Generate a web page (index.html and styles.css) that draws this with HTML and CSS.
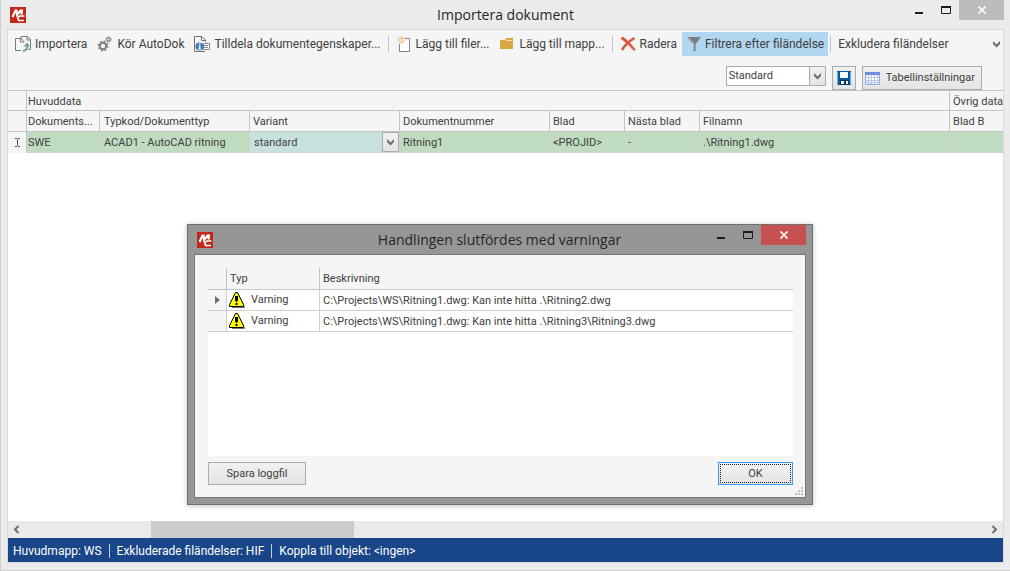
FILE: index.html
```html
<!DOCTYPE html>
<html lang="sv">
<head>
<meta charset="utf-8">
<title>Importera dokument</title>
<link rel="stylesheet" href="styles.css">
</head>
<body>
<svg class="defs" aria-hidden="true">
  <symbol id="logo" viewBox="0 0 16 16">
    <rect width="16" height="16" fill="#c1281b"/>
    <path d="M2.500 10 5.500 3.500 6.500 3.500 7 8 10.500 3.500H12L11.500 7.500" fill="none" stroke="#fff" stroke-width="2.100"/>
    <path d="M14.500 9H10.500Q8 9 8 11.500T10 13.500H14" fill="none" stroke="#fff" stroke-width="1.700"/>
  </symbol>
  <symbol id="chevron" viewBox="0 0 9 7">
    <path d="M1 0V3L4.500 6.500 8 3V0L4.500 3.500Z" fill="#6d6d6d"/>
  </symbol>
  <symbol id="warning" viewBox="0 0 16 16">
    <path d="M8.500 2 15.500 14.500V15.500H3" fill="none" stroke="#777" stroke-width="1"/>
    <path d="M6.500 .5H8.500L14.500 12.500V14.500H.5V12.500Z" fill="#ff0" stroke="#000"/>
    <path d="M6 4H9V8L8 10H7L6 8ZM6.500 11H8.500V13H6.500Z" fill="#000"/>
  </symbol>
</svg>
<div class="window">
  <header class="titlebar">
    <svg class="logo"><use href="#logo"/></svg>
    <h1>Importera dokument</h1>
    <div class="controls">
      <button class="control" aria-label="Minimera"><svg width="12" height="10" viewBox="0 0 12 10"><path d="M2 7H10V9H2Z" fill="#1b1b1b"/></svg></button>
      <button class="control" aria-label="Maximera"><svg width="12" height="10" viewBox="0 0 12 10"><path d="M1.500 1.500H10.500V8.500H1.500Z" fill="none" stroke="#1b1b1b"/><path d="M1 2H11" stroke="#1b1b1b" stroke-width="2"/></svg></button>
      <button class="control close" aria-label="Stäng"><svg width="10" height="8" viewBox="0 0 10 8"><path d="M1.500 .5 8.500 7.500M8.500 .5 1.500 7.500" stroke="#fff" stroke-width="1.700"/></svg></button>
    </div>
  </header>
  <main class="client">
    <div class="toolbar">
      <button class="tool"><svg viewBox="0 0 16 16"><path d="M6 3.500V.5H12.500L15.500 3.500V13.500H13M12 .5V4H15.500" fill="none" stroke="#7b7b7b"/><path d="M.5 2.500H6L9 5.500V6M6 14.500H.5V2.500M5.500 2.500V6H9" fill="none" stroke="#7b7b7b"/><path d="M8 15C12 14.500 12.500 12 12.500 9" fill="none" stroke="#6fa397" stroke-width="2"/><path d="M8.500 10.500 12 6.500 15 10.500Z" fill="#6fa397"/></svg>Importera</button>
      <button class="tool"><svg viewBox="0 0 16 16"><circle cx="6" cy="10" r="3.200" fill="none" stroke="#808080" stroke-width="2"/><circle cx="6" cy="10" r="4.700" fill="none" stroke="#808080" stroke-width="1.500" stroke-dasharray="1.850 1.850"/><circle cx="11.500" cy="3.500" r="1.700" fill="none" stroke="#808080" stroke-width="1.200"/><circle cx="11.500" cy="3.500" r="2.700" fill="none" stroke="#808080" stroke-width="1" stroke-dasharray="1.060 1.060"/></svg>Kör AutoDok</button>
      <button class="tool"><svg viewBox="0 0 16 16"><path d="M11.500 6V4L8 .5H.5V15.500H11M7.500 .5V4.500H11.500" fill="none" stroke="#6f6f6f"/><path d="M9.500 7.500H15.500V13.500H9.500ZM10 9.500H14M10 11.500H14" fill="#fff" stroke="#8a8a8a"/><circle cx="5.500" cy="10.500" r="4" fill="#3a7bbd"/><path d="M5 7H6.500V8.500H5ZM4.500 9.500H6.500V12.500H7V13.500H4V12.500H5V10.500H4.500Z" fill="#fff"/></svg>Tilldela dokumentegenskaper...</button>
      <span class="separator"></span>
      <button class="tool"><svg viewBox="0 0 16 16"><path d="M9 2.500H13.500V15.500H3.500V8" fill="#fff" stroke="#858585"/><path d="M5.500 0V8M1.500 4H9.500M2.500 1 8.500 7M8.500 1 2.500 7" stroke="#e9b75c" stroke-width="1"/><rect x="4.500" y="3" width="2" height="2" fill="#fff"/></svg>Lägg till filer...</button>
      <button class="tool"><svg viewBox="0 0 16 16"><path d="M1 4H6L7.500 2H14V13H1Z" fill="#d8a83f"/><path d="M7 4.500H13.500" stroke="#f6e2b0"/></svg>Lägg till mapp...</button>
      <span class="separator"></span>
      <button class="tool"><svg viewBox="0 0 16 16"><path d="M1 2.500 3 1Q10 6 15 13.500L14 14.500Q8 7 1 2.500Z" fill="#d9593d" stroke="#d9593d"/><path d="M14.500 2Q6 7 2 14" fill="none" stroke="#d9593d" stroke-width="2.600"/></svg>Radera</button>
      <button class="tool pressed" aria-pressed="true"><svg viewBox="0 0 16 16"><path d="M1 1H15L9.500 8V15H7V8Z" fill="#787d80"/><path d="M3 2 7.500 7.500V14" fill="none" stroke="#b8bec2"/></svg>Filtrera efter filändelse</button>
      <span class="separator"></span>
      <button class="tool">Exkludera filändelser</button>
      <button class="overflow" aria-label="Fler"><svg class="chevron"><use href="#chevron"/></svg></button>
    </div>
    <div class="options">
      <div class="combo">
        <select aria-label="Tabellayout"><option>Standard</option></select>
        <span class="drop"><svg class="chevron"><use href="#chevron"/></svg></span>
      </div>
      <button class="push square" aria-label="Spara"><svg width="14" height="14" viewBox="0 0 14 14"><path d="M0 0H14V14H1L0 13Z" fill="#07579b"/><path d="M.5 1V13M13.500 1V13" stroke="#62b2e4"/><path d="M3 1H11V7H3Z" fill="#f5fbff"/><path d="M3 9H12V14H3Z" fill="#12375b"/><path d="M4 10H7V13H4ZM9 10H11V13H9Z" fill="#eef6fb"/></svg></button>
      <button class="push table-settings"><svg width="15" height="13" viewBox="0 0 15 13"><path d="M.5 .5H14.500V12.500H.5Z" fill="#fff" stroke="#8fabe6"/><path d="M0 0H15V3H0Z" fill="#6a8fe4"/><path d="M3.500 3V12M6.500 3V12M9.500 3V12M12.500 3V12M1 5.500H14M1 8.500H14M1 10.500H14" stroke="#b9c8eb"/></svg>Tabellinställningar</button>
    </div>
    <table class="grid">
      <colgroup><col class="w19"><col class="w73"><col class="w150"><col class="w150"><col class="w150"><col class="w75"><col class="w75"><col class="w250"><col></colgroup>
      <thead>
        <tr class="bands"><th></th><th colspan="7">Huvuddata</th><th>Övrig data</th></tr>
        <tr><th></th><th>Dokuments...</th><th>Typkod/Dokumenttyp</th><th>Variant</th><th>Dokumentnummer</th><th>Blad</th><th>Nästa blad</th><th>Filnamn</th><th>Blad B</th></tr>
      </thead>
      <tbody>
        <tr>
          <td class="indicator"><svg width="7" height="9" viewBox="0 0 7 9"><path d="M1 .5H3M4 .5H6M3.500 1V8M1 8.500H3M4 8.500H6" stroke="#555" fill="none"/></svg></td>
          <td>SWE</td><td>ACAD1 - AutoCAD ritning</td>
          <td class="editing"><div class="combo cell-combo"><select aria-label="Variant"><option>standard</option></select><span class="drop"><svg class="chevron"><use href="#chevron"/></svg></span></div></td>
          <td>Ritning1</td><td>&lt;PROJID&gt;</td><td>-</td><td>.\Ritning1.dwg</td><td></td>
        </tr>
      </tbody>
    </table>
    <div class="space"></div>
    <div class="scrollbar">
      <button aria-label="Vänster"><svg width="7" height="9" viewBox="0 0 7 9"><path d="M5.500 1 2 4.500 5.500 8" fill="none" stroke="#6d6d6d" stroke-width="2"/></svg></button>
      <div class="track"><div class="thumb"></div></div>
      <button aria-label="Höger"><svg width="7" height="9" viewBox="0 0 7 9"><path d="M1.500 1 5 4.500 1.500 8" fill="none" stroke="#6d6d6d" stroke-width="2"/></svg></button>
    </div>
    <footer class="status"><span>Huvudmapp: WS</span><span>Exkluderade filändelser: HIF</span><span>Koppla till objekt: &lt;ingen&gt;</span></footer>
  </main>
</div>
<section class="dialog" role="dialog" aria-labelledby="dialog-title">
  <header class="titlebar">
    <svg class="logo"><use href="#logo"/></svg>
    <h2 id="dialog-title">Handlingen slutfördes med varningar</h2>
    <div class="controls">
      <button class="control" aria-label="Minimera"><svg width="12" height="10" viewBox="0 0 12 10"><path d="M2 7H10V9H2Z" fill="#1b1b1b"/></svg></button>
      <button class="control" aria-label="Maximera"><svg width="12" height="10" viewBox="0 0 12 10"><path d="M1.500 1.500H10.500V8.500H1.500Z" fill="none" stroke="#1b1b1b"/><path d="M1 2H11" stroke="#1b1b1b" stroke-width="2"/></svg></button>
      <button class="control close" aria-label="Stäng"><svg width="10" height="8" viewBox="0 0 10 8"><path d="M1.500 .5 8.500 7.500M8.500 .5 1.500 7.500" stroke="#fff" stroke-width="1.700"/></svg></button>
    </div>
  </header>
  <div class="dialog-body">
    <div class="log">
      <table>
        <colgroup><col class="w19"><col class="w93"><col></colgroup>
        <thead><tr><th></th><th>Typ</th><th>Beskrivning</th></tr></thead>
        <tbody>
          <tr><td class="indicator"><svg width="5" height="8" viewBox="0 0 5 8"><path d="M0 0 5 4 0 8Z" fill="#6d6d6d"/></svg></td><td><div class="type"><svg class="warn"><use href="#warning"/></svg>Varning</div></td><td>C:\Projects\WS\Ritning1.dwg: Kan inte hitta .\Ritning2.dwg</td></tr>
          <tr><td class="indicator"></td><td><div class="type"><svg class="warn"><use href="#warning"/></svg>Varning</div></td><td>C:\Projects\WS\Ritning1.dwg: Kan inte hitta .\Ritning3\Ritning3.dwg</td></tr>
        </tbody>
      </table>
    </div>
    <div class="actions">
      <button class="push save-log">Spara loggfil</button>
      <button class="push ok"><span>OK</span></button>
    </div>
    <svg class="grip" width="9" height="9" viewBox="0 0 9 9"><path d="M6 0H8V2H6ZM3 3H5V5H3ZM6 3H8V5H6ZM0 6H2V8H0ZM3 6H5V8H3ZM6 6H8V8H6Z" fill="#bcbcbc"/></svg>
  </div>
</section>
</body>
</html>
```
FILE: styles.css
```css
* { box-sizing: border-box; }
body { margin: 0; font: 11px/16px Roboto, "Noto Sans", sans-serif; color: #404040; }
button, select { font: inherit; color: inherit; margin: 0; padding: 0; border: 0; background: none; }
svg { display: block; flex: none; }
.defs { position: absolute; width: 0; height: 0; }

.window { height: 100vh; display: flex; flex-direction: column; padding: 0 6px; background: #ebebeb; border-left: 1px solid #cfcfcf; }
.window::after { content: ""; flex: none; height: 7px; margin: 0 -6px; border-bottom: 1px solid #cfcfcf; }
.titlebar { display: flex; height: 29px; flex: none; align-items: center; }
.logo { width: 16px; height: 16px; }
.window .titlebar .logo { margin-left: 3px; }
h1, h2 { flex: 1; margin: 0; text-align: center; font-family: "Open Sans", "Noto Sans", sans-serif; font-size: 14px; line-height: 20px; font-weight: 400; color: #262626; white-space: nowrap; }
.window h1 { padding-left: 80px; }
.controls { display: flex; align-self: flex-start; }
.control { width: 27px; height: 20px; display: grid; place-items: center; }
.close { width: 45px; background: #bcbcbc; }
.client { flex: 1; min-height: 0; display: flex; flex-direction: column; background: #fff; border: 1px solid #dadada; }

.toolbar { display: flex; align-items: center; height: 28px; flex: none; padding-left: 2px; background: #f5f5f5; font-size: 12px; white-space: nowrap; }
.tool { display: flex; align-items: center; gap: 4px; height: 24px; padding: 0 5px; }
.tool svg { width: 16px; height: 16px; }
.tool.pressed { gap: 3px; padding: 0 4px; background: #b0d6f0; }
.separator { flex: none; width: 1px; height: 18px; margin: 0 2px; background: #c6c6c6; }
.overflow { margin-left: auto; padding: 0 2px; }
.chevron { width: 9px; height: 7px; }

.options { display: flex; flex: none; justify-content: flex-end; gap: 6px; height: 32px; padding: 8px 21px 0 0; background: #f5f5f5; }
.combo { position: relative; width: 100px; height: 20px; background: #fff; border: 1px solid #ababab; }
.combo select { width: 100%; height: 100%; padding: 0 20px 0 2px; appearance: none; outline: 0; }
.drop { position: absolute; inset: 0 0 0 auto; width: 16px; display: grid; place-items: center; background: linear-gradient(#f1f1f1, #e4e4e4); border-left: 1px solid #ababab; pointer-events: none; }
.push { display: flex; align-items: center; justify-content: center; height: 24px; padding: 0; border: 1px solid #ababab; background: linear-gradient(#f1f1f1, #e4e4e4); white-space: nowrap; }
.square { width: 24px; }
.table-settings { gap: 6px; padding: 0 6px 0 2px; }

table { width: 100%; table-layout: fixed; border-spacing: 0; }
.w19 { width: 19px; }
.w73 { width: 73px; }
.w75 { width: 75px; }
.w93 { width: 93px; }
.w150 { width: 150px; }
.w250 { width: 250px; }
th, td { height: 21px; padding: 1px 0 0 3px; border-right: 1px solid #c4c4c4; border-bottom: 1px solid #c4c4c4; text-align: left; font-weight: 400; white-space: nowrap; overflow: hidden; }
th:last-child, td:last-child { border-right: 0; }
th { background: #f5f5f5; }
.grid { border-top: 1px solid #c4c4c4; }
.grid .bands th { height: 20px; }
.grid th:nth-child(2), .grid td:nth-child(2) { padding-left: 1px; }
.grid tr > :nth-child(3):not(:last-child) { padding-left: 4px; }
.grid th, .grid td { padding-top: 2px; }
.grid td { background: #bfdcc0; border-color: #cdd4cd; }
td.indicator, .grid td.indicator { background: #f5f5f5; padding: 0; border-bottom-color: #f5f5f5; border-right-color: #c4c4c4; }
.indicator svg { margin: 0 auto; }
.grid td.editing { padding: 0; background: #c7e2de; }
.cell-combo { width: 100%; background: none; border: 0; }
.cell-combo select { padding: 1px 20px 0 4px; }
.cell-combo .drop { width: 17px; border: 1px solid #ababab; }
.space { flex: 1; }

.scrollbar { display: flex; flex: none; height: 17px; background: #eaeaea; }
.scrollbar button { width: 17px; display: grid; place-items: center; }
.track { flex: 1; padding-left: 12.7%; }
.thumb { width: 203px; height: 100%; background: #cbcbcb; }
.status { display: flex; align-items: center; flex: none; height: 24px; padding: 1px 0 0 5px; background: #194688; color: #fff; font-size: 12px; white-space: nowrap; }
.status span + span { margin-left: 7px; padding-left: 7px; border-left: 1px solid #c5cfdf; line-height: 14px; }

.dialog { position: absolute; left: 187px; top: 224px; width: 626px; display: flex; flex-direction: column; padding: 0 6px 6px; background: #969696; border: 1px solid #6f6f6f; box-shadow: 0 1px 5px rgba(0, 0, 0, .25); }
.dialog .logo { margin-left: 3px; }
.dialog h2 { padding-left: 79px; }
.dialog .close { background: #c75050; }
.dialog-body { position: relative; padding: 13px 12px 12px 13px; background: #f5f5f5; border: 1px solid #777; }
.log { height: 188px; background: #fff; }
.log td { border-color: #d0d0d0; }
.log tbody tr > :nth-child(2) { padding: 0 0 0 2px; }
.log th { height: 22px; }
.type { display: flex; align-items: center; gap: 6px; }
.warn { width: 16px; height: 16px; }
.actions { display: flex; justify-content: space-between; margin-top: 6px; }
.actions .push { height: 23px; }
.save-log { width: 98px; }
.actions .ok { width: 75px; border-color: #3399ff; padding: 1px; }
.ok span { flex: 1; height: 19px; line-height: 17px; border: 1px dotted #222; }
.grip { position: absolute; right: 1px; bottom: 1px; }
```
